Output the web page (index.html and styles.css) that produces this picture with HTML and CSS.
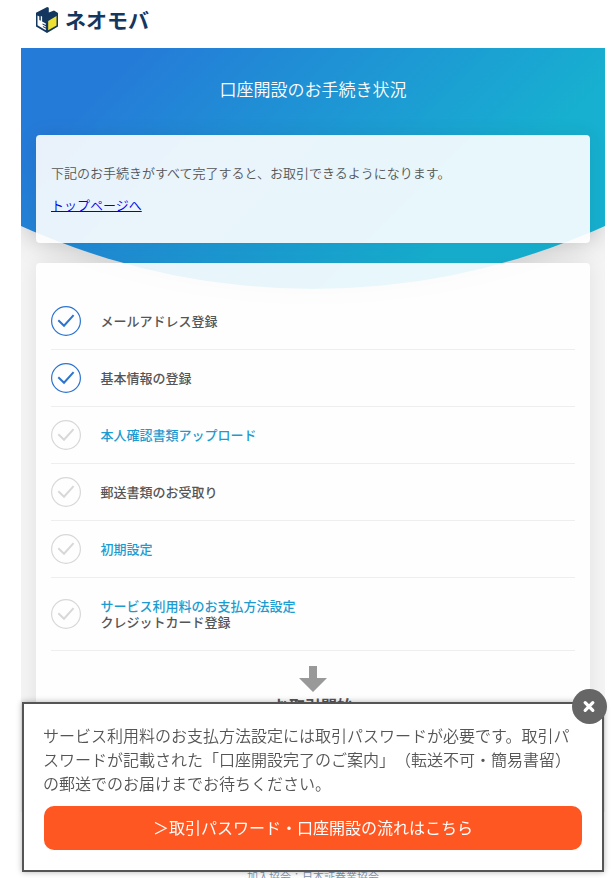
FILE: index.html
```html
<!DOCTYPE html>
<html lang="ja">
<head>
<meta charset="utf-8">
<title>口座開設のお手続き状況</title>
<link rel="stylesheet" href="styles.css">
</head>
<body>
<svg class="defs" aria-hidden="true">
  <symbol id="check" viewBox="0 0 30 30"><circle cx="15" cy="15" r="14.4"/><path class="tick" d="M7.3 14.3 L13 19.7 L22.6 9.2"/></symbol>
</svg>
<header class="header">
  <svg class="mark" viewBox="0 0 22 26">
    <path fill="#14375f" d="M0 5.8 L11.2 0 L12.8 .8 V5.6 L18 3.6 L22 6 V19.5 L11 26 L0 19.5 Z"/>
    <path fill="#fff" d="M1.5 8.4 L3.3 9.5 V13 L4.8 13.8 V8.9 L6.1 9.6 V14.6 L9.8 16.6 V18 L6.5 16.5 V17.5 L9.8 19.2 V20.4 L6.9 19 V20 L9.8 21.6 V23.2 L1.5 18.3 Z"/>
    <path fill="#eee133" d="M12.2 14 L20.5 9 V18.4 L12.2 23.2 Z"/>
  </svg>
  <span class="brand">ネオモバ</span>
</header>
<main class="page">
  <div class="hero-shadow"><div class="hero"></div></div>
  <h1 class="title">口座開設のお手続き状況</h1>
  <section class="card intro">
    <p>下記のお手続きがすべて完了すると、お取引できるようになります。</p>
    <p><a href="#">トップページへ</a></p>
  </section>
  <section class="card steps">
    <ul class="list">
      <li class="step done"><svg class="check"><use href="#check"/></svg><div>メールアドレス登録</div></li>
      <li class="step done"><svg class="check"><use href="#check"/></svg><div>基本情報の登録</div></li>
      <li class="step"><svg class="check"><use href="#check"/></svg><div><span class="link">本人確認書類アップロード</span></div></li>
      <li class="step"><svg class="check"><use href="#check"/></svg><div>郵送書類のお受取り</div></li>
      <li class="step"><svg class="check"><use href="#check"/></svg><div><span class="link">初期設定</span></div></li>
      <li class="step tall"><svg class="check"><use href="#check"/></svg><div><div class="link line">サービス利用料のお支払方法設定</div><div class="line">クレジットカード登録</div></div></li>
    </ul>
    <svg class="arrow" viewBox="0 0 28 26"><path d="M10 0 H18 V12 H28 L14 26 L0 12 H10 Z"/></svg>
    <p class="start">お取引開始</p>
  </section>
</main>
<footer class="footer">加入協会：日本証券業協会</footer>
<div class="modal">
  <p class="message">サービス利用料のお支払方法設定には取引パスワードが必要です。取引パスワードが記載された「口座開設完了のご案内」（転送不可・簡易書留）の郵送でのお届けまでお待ちください。</p>
  <a class="button">＞取引パスワード・口座開設の流れはこちら</a>
  <svg class="close" viewBox="0 0 35 35"><circle cx="17.5" cy="17.5" r="17.5"/><path d="M13.2 13.7 L20.8 21.3 M20.8 13.7 L13.2 21.3"/></svg>
</div>
</body>
</html>
```
FILE: styles.css
```css
* { box-sizing: border-box; }
html { overflow: hidden; }
body {
  margin: 0;
  height: 878px;
  overflow: hidden;
  background: #fff;
  color: #555;
  font: 350 13px/16px "Noto Sans CJK JP DemiLight", "Noto Sans CJK JP", sans-serif;
  text-spacing-trim: space-all;
}
p, ul, h1 { margin: 0; padding: 0; }
.defs { position: absolute; width: 0; height: 0; }
.header {
  display: flex;
  align-items: flex-start;
  height: 48px;
  padding: 7px 0 0 36px;
}
.mark { width: 22px; height: 26px; }
.brand {
  margin-left: 7px;
  color: #14375f;
  font-family: "Noto Sans CJK JP", sans-serif;
  font-size: 21px;
  font-weight: 700;
  line-height: 25px;
}
.page {
  position: relative;
  width: 584px;
  height: 764px;
  margin-left: 21px;
  padding: 0 15px;
  background: #f4f4f4;
  overflow: hidden;
}
.hero-shadow {
  position: absolute;
  z-index: 0;
  inset: 0 0 auto;
  filter: drop-shadow(0 4px 14px rgba(0, 0, 0, .15));
}
.hero {
  height: 241px;
  background: linear-gradient(135deg, #257bd8 14%, #17b0d0 75%);
  clip-path: circle(708px at 50% -467px);
}
.title {
  position: relative;
  z-index: 2;
  height: 87px;
  color: #fff;
  font-size: 17px;
  font-weight: 350;
  line-height: 81px;
  text-align: center;
}
.card {
  position: relative;
  z-index: 1;
  padding: 30px 15px;
  border-radius: 4px;
  background: rgba(255, 255, 255, .9);
  box-shadow: 0 0 20px rgba(0, 0, 0, .08);
}
.intro { height: 108px; }
.intro p { margin-bottom: 16px; }
.intro a { color: #00e; }
.steps { height: 600px; margin-top: 20px; }
.list { list-style: none; }
.step {
  display: flex;
  align-items: center;
  height: 57px;
  border-bottom: 1px solid #eee;
  font-family: "Noto Sans CJK JP", sans-serif;
  font-weight: 500;
}
.step.tall { height: 73px; }
.line { height: 16px; }
.check {
  width: 30px;
  height: 30px;
  margin-right: 19.5px;
  fill: none;
  stroke: #d8d8d8;
  stroke-width: 1.2;
}
.tick { stroke-width: 2; }
.done .check { stroke: #2c74d0; }
.link { color: #1c9bd0; }
.arrow {
  display: block;
  width: 28px;
  height: 26px;
  margin: 15px auto 0;
  fill: #999;
}
.start {
  margin-top: 1px;
  font-family: "Noto Sans CJK JP", sans-serif;
  font-size: 16px;
  font-weight: 700;
  line-height: 24px;
  text-align: center;
}
.footer {
  width: 584px;
  margin: 56px 0 0 21px;
  color: #7c93ab;
  font-size: 11px;
  text-align: center;
}
.modal {
  position: fixed;
  z-index: 10;
  left: 22px;
  top: 702px;
  width: 582px;
  height: 170px;
  padding: 19px 20px 0 19px;
  border: 2px solid #555;
  background: #fff;
  box-shadow: 0 0 6px rgba(0, 0, 0, .3);
}
.message { width: 530px; font-size: 16px; line-height: 24px; }
.button {
  display: block;
  height: 44px;
  margin: 11px 0 0 1px;
  border-radius: 10px;
  background: #ff5722;
  color: #fff;
  font-family: "Noto Sans CJK JP", sans-serif;
  font-size: 16px;
  font-weight: 400;
  line-height: 42px;
  text-align: center;
}
.close {
  position: absolute;
  top: -15px;
  right: -5px;
  width: 35px;
  height: 35px;
  fill: #666;
  stroke: #fff;
}
.close circle { stroke: none; }
.close path { stroke-width: 3.3; stroke-linecap: round; }
```
